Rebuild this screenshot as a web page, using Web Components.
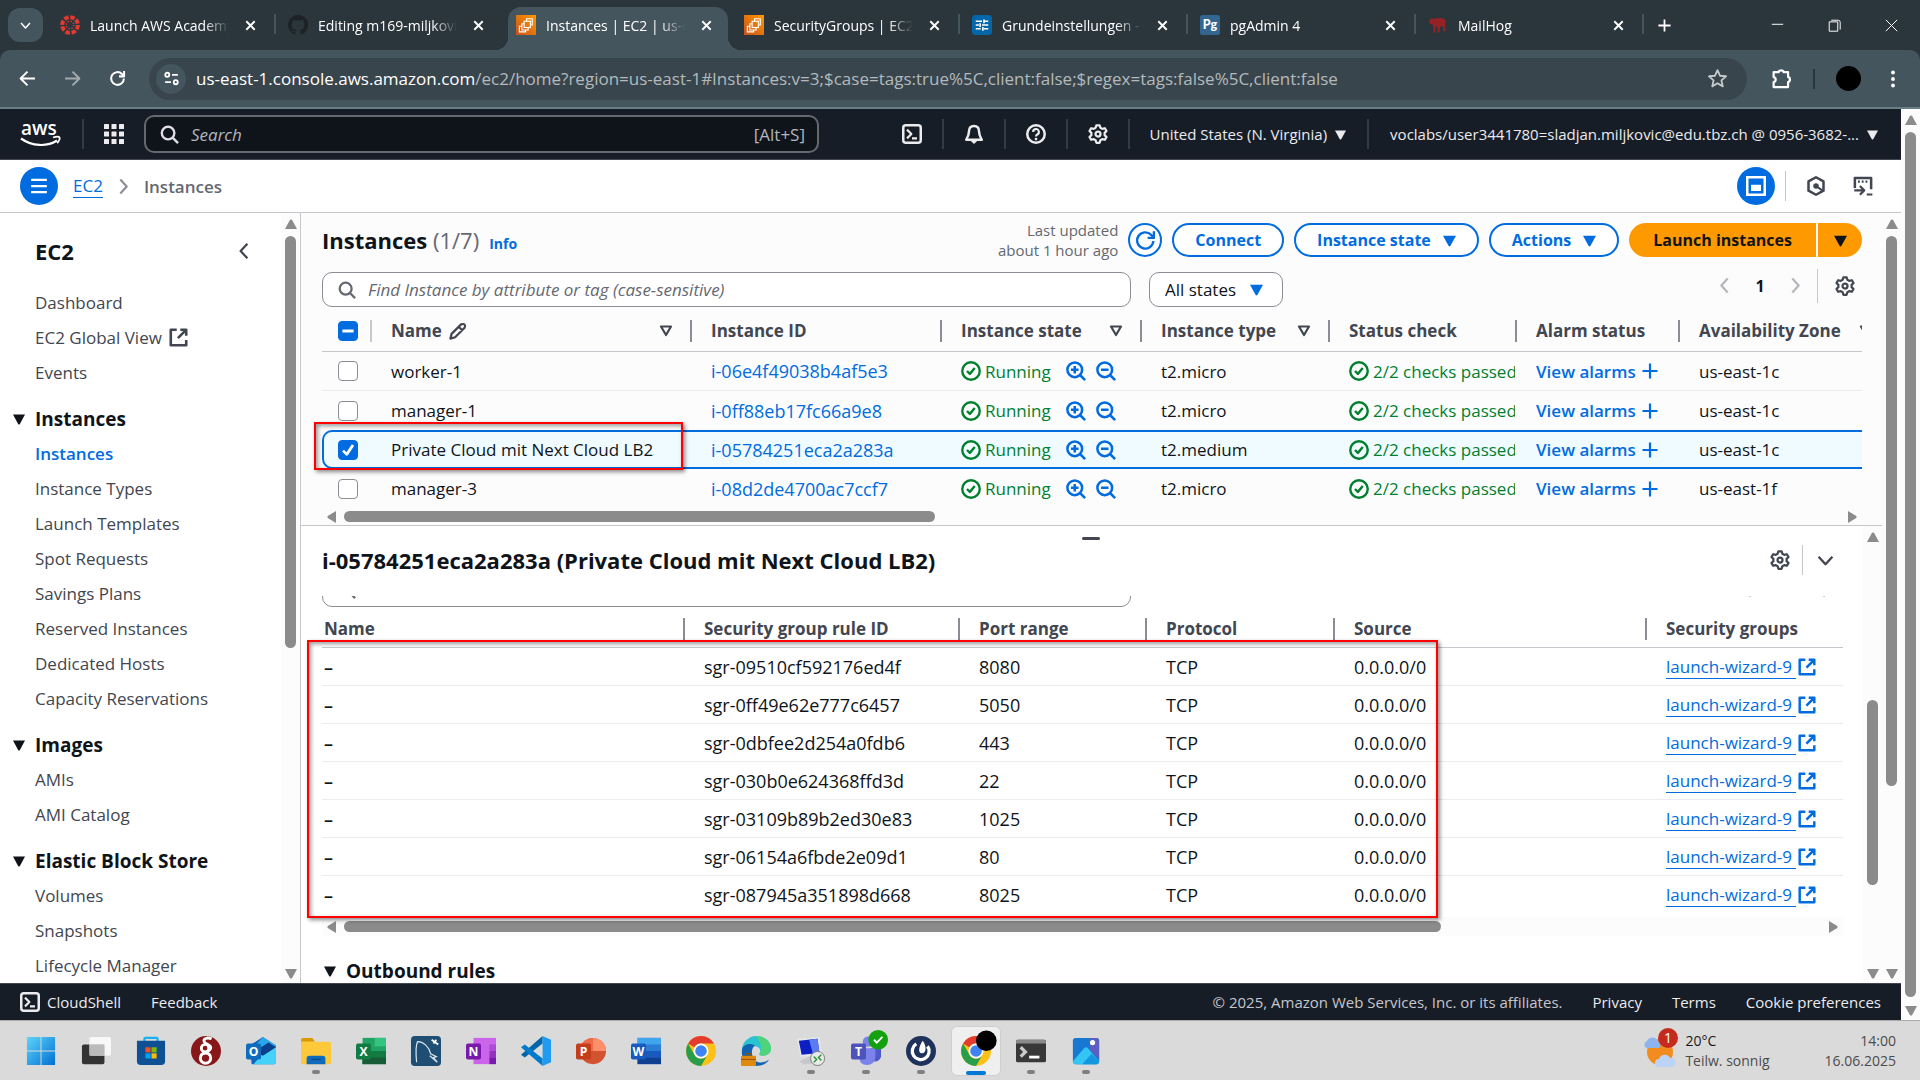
<!DOCTYPE html>
<html lang="en">
<head>
<meta charset="utf-8">
<title>Instances | EC2 | us-east-1</title>
<style>
  html, body { margin: 0; height: 100%; }
  body {
    display: flex; flex-direction: column; height: 100vh; overflow: hidden;
    font-family: "Open Sans", "Noto Sans", sans-serif; font-size: 17px; color: #0f141a; background: #fff;
    --blue: #006ce0; --navy: #161d26; --line: #c6c6cd; --grey: #424650; --muted: #656871; --green: #00802f;
  }
  .view { flex: 1; min-height: 0; display: flex; }
  .page { flex: 1; min-width: 0; display: flex; flex-direction: column; }
  .work { flex: 1; min-height: 0; display: flex; }
  .main { flex: 1; min-width: 0; display: flex; flex-direction: column; background: #fcfcfd; }
</style>
</head>
<body>
<chrome-tabs>
  <chrome-tab icon="canvas" sep>Launch AWS Academy Learner Lab</chrome-tab>
  <chrome-tab icon="github">Editing m169-miljkovic/README</chrome-tab>
  <chrome-tab icon="ec2" active>Instances | EC2 | us-east-1</chrome-tab>
  <chrome-tab icon="ec2" sep>SecurityGroups | EC2 | us-east</chrome-tab>
  <chrome-tab icon="tune" sep>Grundeinstellungen - Nextcloud</chrome-tab>
  <chrome-tab icon="pg" sep>pgAdmin 4</chrome-tab>
  <chrome-tab icon="hog" sep>MailHog</chrome-tab>
</chrome-tabs>
<chrome-toolbar></chrome-toolbar>
<div class="view">
  <div class="page">
    <aws-header></aws-header>
    <crumb-bar></crumb-bar>
    <div class="work">
      <side-nav></side-nav>
      <div class="main">
        <instance-list></instance-list>
        <split-panel></split-panel>
      </div>
      <scroll-bar before="0" thumb="550" after="176"></scroll-bar>
    </div>
    <aws-footer></aws-footer>
  </div>
  <scroll-bar before="0" thumb="865" after="2"></scroll-bar>
</div>
<win-taskbar></win-taskbar>

<script>
const BASE = ':host,*{box-sizing:border-box}a{color:inherit;text-decoration:none}button,input,select{font:inherit;color:inherit;margin:0}input[type=text]{padding:0}button{background:none;border:0;padding:0;display:flex;align-items:center;justify-content:center}';

function define(name, css, html, setup) {
  const tpl = document.createElement('template');
  if (typeof html === 'string') tpl.innerHTML = '<style>' + BASE + css + '</style>' + html;
  customElements.define(name, class extends HTMLElement {
    connectedCallback() {
      if (this.shadowRoot) return;
      const root = this.attachShadow({ mode: 'open' });
      if (typeof html === 'function') root.innerHTML = '<style>' + BASE + css + '</style>' + html(this);
      else root.append(tpl.content.cloneNode(true));
      if (setup) setup(root, this);
    }
  });
}

/* ---------- icons, 16-unit grid, stroked in the current colour ---------- */
const S = (d, w = 2) => `<path d="${d}" fill="none" stroke="currentColor" stroke-width="${w}" stroke-linejoin="round"/>`;
const ICONS = {
  menu: S('M1 2.5h14M1 8h14M1 13.5h14'),
  close: S('M3.5 3.5l9 9M12.5 3.5l-9 9', 2),
  closeThin: S('M1 1l14 14M15 1L1 15', 1.2),
  min: S('M1 6.5h14', 1.2),
  restore: S('M1.5 3.5h10.500v11.500h-10.500z', 1.2) + S('M4 1.500h8.500q2.500 0 2.500 2.500v9', 1.2),
  plus: S('M8 .5v15M.5 8h15', 2.200),
  chevDown: S('M1.500 4.500l6.500 7 6.500-7', 2.200),
  chevLeft: S('M11 1.5L5 8l6 6.5', 2),
  chevRight: S('M5 1.5L11 8l-6 6.5', 2),
  back: S('M15 8H2M8 1.5L1.5 8 8 14.5', 1.8),
  forward: S('M1 8h13M8 1.5L14.5 8 8 14.5', 1.8),
  reload: S('M14 8a6 6 0 1 1-1.8-4.3L14 5.4', 1.9) + S('M14.2 1v5H9.4', 1.9),
  refresh: S('M14 8.4A6.2 6.2 0 1 1 12.4 3.8L14 5.4', 1.8) + S('M14.4 1v5H9.6', 1.8),
  site: '<g fill="none" stroke="currentColor" stroke-width="1.7"><circle cx="4" cy="4.5" r="1.9"/><path d="M8.5 4.5H14M2 11.5h5.5"/><circle cx="12" cy="11.5" r="1.9"/></g>',
  star: S('M8 1.6l1.9 4.3 4.6.4-3.5 3.1 1 4.6L8 11.6 4 14l1-4.6L1.500 6.300l4.6-.4z', 1.4),
  puzzle: S('M2 3.200h3.800a2 1.800 0 0 1 3.900 0H13v3.600a1.800 2 0 0 1 0 3.900V14.500H2v-3.700a2 2 0 0 0 0-3.900z', 1.7),
  dots: '<g fill="currentColor"><circle cx="8" cy="2.200" r="1.700"/><circle cx="8" cy="8" r="1.700"/><circle cx="8" cy="13.800" r="1.700"/></g>',
  search: '<g fill="none" stroke="currentColor" stroke-width="2"><circle cx="6.800" cy="6.800" r="5.300"/><path d="M10.600 10.600l4.600 4.600"/></g>',
  grid: '<g fill="currentColor">' + [0, 6, 12].map(y => [0, 6, 12].map(x => `<rect x="${x}" y="${y}" width="4" height="4" rx=".4"/>`).join('')).join('') + '</g>',
  shell: '<rect x="1" y="1" width="14" height="14" rx="2" fill="none" stroke="currentColor" stroke-width="2"/>' + S('M4 4.500L7.500 8 4 11.500M8 11.500h4', 1.700),
  bell: S('M8 1.500c-2.800 0-4 2-4 4.300C4 9 3 10.500 1.800 12.500h12.400C13 10.500 12 9 12 5.800 12 3.500 10.800 1.500 8 1.500z', 2) + '<path d="M5.500 13.500h5L8 16z" fill="currentColor"/>',
  help: '<circle cx="8" cy="8" r="7" fill="none" stroke="currentColor" stroke-width="2"/>' + S('M5.700 6.400a2.300 2.300 0 1 1 3.300 2c-.7.400-1 .8-1 1.600', 1.700) + '<circle cx="8" cy="12" r="1.100" fill="currentColor"/>',
  gear: S('M6.700 1h2.600l.6 2 1.500.9 2.100-.5 1.300 2.200-1.500 1.500v1.800l1.500 1.500-1.300 2.200-2.100-.5-1.500.9-.6 2H6.700l-.6-2-1.500-.9-2.100.5-1.300-2.200 1.500-1.500V7.100L1.200 5.600l1.300-2.200 2.100.5 1.500-.9z', 1.800) + '<circle cx="8" cy="8" r="2" fill="none" stroke="currentColor" stroke-width="1.800"/>',
  caret: '<path d="M0 2h16L9.200 14.500q-1.200 1.500-2.400 0z" fill="currentColor"/>',
  filter: S('M3 3.500h10l-5 8.500z', 2.200),
  panel: '<rect x="1" y="1" width="14" height="14" fill="none" stroke="currentColor" stroke-width="2"/><path d="M4 7h8v5H4z" fill="currentColor"/>',
  hex: S('M8 1l6 3.300v7.400L8 15l-6-3.300V4.300z', 2) + '<circle cx="8" cy="8" r="2.200" fill="currentColor"/>' + S('M8 8l5 3.500', 1.700),
  term: S('M1.500 9.500v-8h13v9', 2) + S('M4 4.500h1.500M7 4.500h1.500M10 4.500h1.500M1 11.500h7.500M5.500 8l3.500 3.500L5.500 15M11 14.800h4.500', 1.700),
  external: S('M6.500 1.500h-5v13h13v-4.500M9.500 1.500h5v5M14 2L7.500 8.500', 2.200),
  edit: S('M2 14l1-4 8-8q2.200-.8 3 .2t0 2.600l-8 8zM9 4l3 3', 1.800),
  ok: '<circle cx="8" cy="8" r="7" fill="none" stroke="currentColor" stroke-width="1.900"/>' + S('M4.800 8l2.300 2.300L11 5.600', 1.900),
  zoomIn: '<g fill="none" stroke="currentColor" stroke-width="2"><circle cx="7" cy="7" r="5.900"/><path d="M11 11l4.300 4.300M7 4v6M4 7h6"/></g>',
  zoomOut: '<g fill="none" stroke="currentColor" stroke-width="2"><circle cx="7" cy="7" r="5.900"/><path d="M11 11l4.300 4.300M4 7h6"/></g>',
  check: S('M4 8.500l3 3 5-7.500', 2.200),
  dash: S('M3.500 8h9', 2.400),
  canvas: '<circle cx="8" cy="8" r="6.300" fill="none" stroke="#e4392f" stroke-width="3.200" stroke-dasharray="3.600 1.350"/><circle cx="8" cy="8" r="3" fill="none" stroke="#e4392f" stroke-width="1.100" stroke-dasharray="1.100 1.260"/>',
  github: '<path fill="#1c2226" d="M8 0a8 8 0 0 0-2.500 15.600c.4.100.5-.2.500-.4v-1.500c-2 .5-2.600-.6-2.800-1.100-.3-.6-.7-.9-1-1.100.7-.2 1.300.3 1.700.9.600 1 1.400.9 2.100.6.100-.5.300-.8.500-1-1.800-.2-3.600-.9-3.600-4 0-.9.300-1.600.8-2.100-.1-.4-.3-1.200.1-2.200 0 0 .7-.2 2.200.8a7.500 7.500 0 0 1 4 0c1.500-1 2.200-.8 2.200-.8.400 1 .2 1.800.1 2.200.5.500.8 1.200.8 2.100 0 3.100-1.900 3.800-3.600 4 .3.300.5.700.5 1.500v1.700c0 .2.100.500.6.4A8 8 0 0 0 8 0z"/>',
  ec2: '<defs><linearGradient id="g" x1="0" y1="1" x2="1" y2="0"><stop offset="0" stop-color="#c8511b"/><stop offset="1" stop-color="#f90"/></linearGradient></defs><path fill="url(#g)" d="M0 0h16v16H0z"/><g fill="none" stroke="#fff" stroke-width=".9"><rect x="6.500" y="5" width="5" height="5"/><path d="M8.500 5V3H13v5h-1.500M6.500 7H4.700v5h5v-2M4.700 9H2.700v4.500h5V12"/></g>',
  tune: '<rect width="16" height="16" rx="3" fill="#0267a8"/><g stroke="#fff" stroke-width="1.300"><path d="M3 5h5M10 5h3M3 8h2.500M8 8h5M3 11h4M9.500 11H13M9.600 3.500v3M6.500 6.500v3M8.700 9.500v3"/></g>',
  pg: '<rect width="16" height="16" rx="2" fill="#326690"/><text x="8" y="11" text-anchor="middle" font-family="Lato,sans-serif" font-weight="900" font-size="10" fill="#fff">Pg</text>',
  hog: '<path fill="#952225" d="M1 4l2-1.500 2 .5c3-1 7-1 8.500.5 1 1.500.6 3 .3 4l.2 5.500h-1.500l-.5-4-2.500.5-.2 4.500H7.800L7.500 9.500 6 9.300V14H4.500L4 8 1.500 7z"/>',
};
define('ui-icon', ':host{display:block;flex:none;width:20px;height:20px}svg{display:block;width:100%;height:100%;overflow:visible}',
  el => `<svg viewBox="0 0 16 16" aria-hidden="true">${ICONS[el.getAttribute('name')]}</svg>`);

/* ---------- scroll bar: arrows at both ends, thumb placed by flex shares ---------- */
define('scroll-bar', `
  :host{display:flex;flex:none;flex-direction:column;align-items:center;width:19px;padding:6px 0 4px;background:#fcfcfc;color:#8b8b8b}
  :host([wide]){flex-direction:row;width:auto;height:17px;padding:0 5px}
  svg{display:block;flex:none;width:12px;height:10px}
  :host([wide]) svg{width:9px;height:12px}
  .rail{flex:1;display:flex;flex-direction:column;align-self:center;width:11px;padding:7px 0;margin:0}
  :host([wide]) .rail{flex-direction:row;width:auto;height:11px;padding:0 8px}
  .thumb{border-radius:6px;background:#8b8b8b}`,
  el => {
    const a = n => +el.getAttribute(n), wide = el.hasAttribute('wide');
    const tri = up => `<svg viewBox="0 0 12 12" preserveAspectRatio="none"><path fill="currentColor" d="${wide ? (up ? 'M12 0v12L1 7Q0 6 1 5z' : 'M0 0v12l11-5q1-1 0-2z') : (up ? 'M0 12h12L7 1Q6 0 5 1z' : 'M0 0h12L7 11q-1 1-2 0z')}"/></svg>`;
    return `${tri(true)}<div class="rail"><span style="flex:${a('before')} 0 0"></span><span class="thumb" style="flex:${a('thumb')} 0 0"></span><span style="flex:${a('after')} 0 0"></span></div>${tri(false)}`;
  });

/* ---------- browser frame ---------- */
define('chrome-tabs', `
  :host{display:flex;align-items:flex-end;height:50px;flex:none;padding-left:8px;background:#2b363c;color:#fff}
  .pick{width:35px;height:34px;margin:0 5px 8px 0;border-radius:12px;background:#44555e}
  .pick ui-icon{width:11px;height:11px}
  .add{width:40px;height:34px;margin-bottom:8px}.add ui-icon{width:13px;height:13px}
  .win{display:flex;margin-left:auto;height:50px}.win button{width:57px}.win ui-icon{width:13px;height:13px}`,
  `<button class="pick" aria-label="Search tabs"><ui-icon name="chevDown"></ui-icon></button>
   <slot></slot>
   <button class="add" aria-label="New tab"><ui-icon name="plus"></ui-icon></button>
   <div class="win"><button aria-label="Minimize"><ui-icon name="min"></ui-icon></button><button aria-label="Restore"><ui-icon name="restore"></ui-icon></button><button aria-label="Close"><ui-icon name="closeThin"></ui-icon></button></div>`);

define('chrome-tab', `
  :host{display:flex;flex:0 1 228px;min-width:0;height:43px;padding:0 4px;position:relative;font-size:14px}
  .tab{flex:1;min-width:0;display:flex;align-items:center;gap:10px;padding:0 14px 7px 8px;border-radius:13px 13px 0 0}
  :host([active]) .tab{background:#44555e}
  :host([active])::before,:host([active])::after{content:"";position:absolute;bottom:0;width:13px;height:13px}
  :host([active])::before{left:-9px;background:radial-gradient(circle at 0 0,transparent 13px,#44555e 13px)}
  :host([active])::after{right:-9px;background:radial-gradient(circle at 100% 0,transparent 13px,#44555e 13px)}
  :host([sep])::before{content:"";position:absolute;right:0;top:7px;width:2px;height:20px;background:#44555e}
  .t{flex:1;min-width:0;overflow:hidden;white-space:nowrap;-webkit-mask-image:linear-gradient(90deg,#000 82%,transparent);mask-image:linear-gradient(90deg,#000 82%,transparent)}
  button{width:15px;height:15px;margin-left:4px}button ui-icon{width:15px;height:15px}`,
  el => `<div class="tab"><ui-icon name="${el.getAttribute('icon')}"></ui-icon><span class="t"><slot></slot></span><button aria-label="Close tab"><ui-icon name="close"></ui-icon></button></div>`);

define('chrome-toolbar', `
  :host{display:block;flex:none;background:#2b363c;color:#fff}
  .bar{display:flex;align-items:center;height:59px;border-bottom:2px solid #6b7f86;background:#44555e;border-radius:10px 10px 0 0;padding:0 18px 0 19px}
  ui-icon{width:17px;height:17px}
  .nav{display:flex;gap:28px;margin-right:23px}.nav .off{opacity:.5}
  .url{flex:1;min-width:0;display:flex;align-items:center;height:42px;padding:0 19px 0 7px;border-radius:21px;background:#39454c}
  .site{width:30px;height:30px;border-radius:50%;background:#44555e;margin-right:10px;flex:none}
  .addr{flex:1;white-space:nowrap;overflow:hidden;color:#b3babd}.addr b{font-weight:400;color:#fff}
  .url .star{color:#c3c9cc}.url .star ui-icon{width:21px;height:21px}
  .ext{margin-left:24px}.ext ui-icon{width:21px;height:21px}
  .sep{width:2px;height:20px;margin:0 21px;background:#2b363c}
  .me{width:25px;height:25px;border-radius:50%;background:#000;margin-right:23px}
  .dots ui-icon{width:18px;height:18px}`,
  `<div class="bar"><div class="nav"><button aria-label="Back"><ui-icon name="back"></ui-icon></button><button class="off" aria-label="Forward"><ui-icon name="forward"></ui-icon></button><button aria-label="Reload"><ui-icon name="reload"></ui-icon></button></div>
   <div class="url"><button class="site" aria-label="Site information"><ui-icon name="site"></ui-icon></button><span class="addr"><b>us-east-1.console.aws.amazon.com</b>/ec2/home?region=us-east-1#Instances:v=3;$case=tags:true%5C,client:false;$regex=tags:false%5C,client:false</span><button class="star" aria-label="Bookmark"><ui-icon name="star"></ui-icon></button></div>
   <button class="ext" aria-label="Extensions"><ui-icon name="puzzle"></ui-icon></button><span class="sep"></span><button class="me" aria-label="Profile"></button><button class="dots" aria-label="Menu"><ui-icon name="dots"></ui-icon></button></div>`);

/* ---------- console header ---------- */
define('aws-header', `
  :host{display:flex;align-items:center;flex:none;height:51px;padding:0 23px 0 20px;background:var(--navy);border-bottom:1px solid var(--grey);color:#ebebf0;font-size:15px}
  .logo{display:block;width:42px;height:30px;overflow:visible}
  .sep{flex:none;width:2px;height:30px;margin:0 20px;background:#343b46}.sep.w{margin:0 21px}
  .search{flex:0 1 675px;display:flex;align-items:center;gap:12px;height:38px;margin-left:20px;padding:0 12px 0 14px;border:2px solid #656871;border-radius:10px;background:#0f141a;font-size:17px;color:#b4b4bb}
  .search ui-icon{width:19px;height:19px;color:#dedee3}
  .search input{flex:1;min-width:0;background:none;border:0;outline:0}
  .search input::placeholder{color:#b4b4bb;font-style:italic;opacity:1}
  .right{margin-left:auto;display:flex;align-items:center;white-space:nowrap}
  .right button{gap:8px;font-weight:500}.caret{width:11px;height:11px}`,
  `<a href="#" aria-label="AWS home"><svg class="logo" viewBox="0 0 42 30"><text x="1" y="16" font-family="Open Sans,sans-serif" font-weight="600" font-size="19" fill="#fff">aws</text><path d="M1 19.500c11 8 26 8.500 36 2" fill="none" stroke="#fff" stroke-width="2.200"/><path d="M33 18.500c3-1 6-1 6.500 0s-.6 3.600-2.300 5.600" fill="none" stroke="#fff" stroke-width="1.800"/></svg></a>
   <span class="sep"></span><button aria-label="Services"><ui-icon name="grid"></ui-icon></button>
   <label class="search"><ui-icon name="search"></ui-icon><input type="text" placeholder="Search" aria-label="Search"><span>[Alt+S]</span></label>
   <div class="right"><button aria-label="CloudShell"><ui-icon name="shell"></ui-icon></button><span class="sep"></span><button aria-label="Notifications"><ui-icon name="bell"></ui-icon></button><span class="sep"></span><button aria-label="Help"><ui-icon name="help"></ui-icon></button><span class="sep"></span><button aria-label="Settings"><ui-icon name="gear"></ui-icon></button><span class="sep"></span>
   <button>United States (N. Virginia)<ui-icon class="caret" name="caret"></ui-icon></button><span class="sep w"></span>
   <button>voclabs/user3441780=sladjan.miljkovic@edu.tbz.ch @ 0956-3682-...<ui-icon class="caret" name="caret"></ui-icon></button></div>`);

define('crumb-bar', `
  :host{display:flex;align-items:center;flex:none;height:53px;padding:0 28px 0 20px;background:#fff;border-bottom:1px solid var(--line);color:var(--grey)}
  .round{width:38px;height:38px;border-radius:50%;background:var(--blue);color:#fff}
  .round ui-icon{width:18px;height:18px}.round .big{width:20px;height:20px}
  a{margin-left:15px;color:var(--blue);line-height:22px;border-bottom:1px solid}
  .chev{width:17px;height:17px;margin:0 12px;color:#8c8c94}
  b{font-weight:600;color:var(--muted)}
  .tools{margin-left:auto;display:flex;align-items:center}
  .sep{width:1px;height:30px;margin:0 20px 0 10px;background:var(--line)}.last{margin-left:27px}`,
  `<button class="round" aria-label="Toggle navigation"><ui-icon name="menu"></ui-icon></button><a href="#">EC2</a><ui-icon class="chev" name="chevRight"></ui-icon><b>Instances</b>
   <div class="tools"><button class="round" aria-label="Split panel"><ui-icon class="big" name="panel"></ui-icon></button><span class="sep"></span><button aria-label="Amazon Q"><ui-icon name="hex"></ui-icon></button><button class="last" aria-label="Terminal"><ui-icon name="term"></ui-icon></button></div>`);

/* ---------- side navigation ---------- */
const NAV = [['', ['Dashboard', 'EC2 Global View', 'Events']],
  ['Instances', ['Instances', 'Instance Types', 'Launch Templates', 'Spot Requests', 'Savings Plans', 'Reserved Instances', 'Dedicated Hosts', 'Capacity Reservations']],
  ['Images', ['AMIs', 'AMI Catalog']],
  ['Elastic Block Store', ['Volumes', 'Snapshots', 'Lifecycle Manager']]];
define('side-nav', `
  :host{display:flex;flex:none;width:301px;border-right:1px solid var(--line);background:#fff;overflow:hidden}
  nav{flex:1;min-width:0;overflow:hidden;padding-top:20px}
  header{display:flex;align-items:center;justify-content:space-between;height:36px;margin-bottom:16px;padding:0 28px 0 35px;font-size:22px;font-weight:700}
  header ui-icon{width:18px;height:18px;color:var(--grey)}
  a,h3{display:flex;align-items:center;height:35px;margin:0;white-space:nowrap}
  a{gap:7px;padding-left:35px;color:var(--grey)}a ui-icon{width:19px;height:19px}
  .on{color:var(--blue);font-weight:600}
  h3{gap:10px;margin-top:11px;padding-left:13px;font-size:19px;font-weight:700}h3 ui-icon{width:12px;height:12px}`,
  () => `<nav><header>EC2<button aria-label="Close navigation"><ui-icon name="chevLeft"></ui-icon></button></header>` +
    NAV.map(([h, items]) => (h ? `<h3><ui-icon name="caret"></ui-icon>${h}</h3>` : '') +
      items.map(t => `<a href="#" class="${t === 'Instances' ? 'on' : ''}">${t}${t === 'EC2 Global View' ? '<ui-icon name="external"></ui-icon>' : ''}</a>`).join('')).join('') +
    `</nav><scroll-bar before="0" thumb="412" after="314"></scroll-bar>`);

/* ---------- shared rules of the two tables ---------- */
const TABLE = `
  table{border-collapse:separate;border-spacing:0;table-layout:fixed}
  th,td{padding:0 0 0 21px;text-align:left;font-weight:400;white-space:nowrap;overflow:hidden}
  th{height:41px;padding:0;border-bottom:1px solid var(--line);font-weight:700;color:var(--grey)}
  th>div{display:flex;align-items:center;height:22px;padding-left:19px;border-left:2px solid #8c8c94;line-height:22px}
  td{border-bottom:1px solid #ebebf0}
  .line{display:flex;align-items:center}`;
const mark = '.mark{position:absolute;z-index:2;border:2px solid #f00;box-shadow:2px 2px 4px rgba(0,0,0,.45),inset 2px 2px 4px rgba(0,0,0,.4);pointer-events:none}';

const ROWS = [['worker-1', 'i-06e4f49038b4af5e3', 't2.micro', 'us-east-1c'], ['manager-1', 'i-0ff88eb17fc66a9e8', 't2.micro', 'us-east-1c'],
  ['Private Cloud mit Next Cloud LB2', 'i-05784251eca2a283a', 't2.medium', 'us-east-1c'], ['manager-3', 'i-08d2de4700ac7ccf7', 't2.micro', 'us-east-1f']];
define('instance-list', TABLE + mark + `
  :host{display:block;flex:none;position:relative;padding:10px 20px 0 21px}
  .top,.find{display:flex;align-items:center}
  .top{gap:10px;height:34px;margin-bottom:15px}
  h1{margin:0 auto 0 0;font-size:22px;font-weight:700}h1 span{font-weight:400;color:var(--muted)}h1 a{font-size:14px;color:var(--blue);margin-left:10px}
  .upd{font-size:15px;line-height:20px;text-align:right;color:var(--muted)}
  .btn{height:34px;padding:0 21px;gap:12px;border:2px solid var(--blue);border-radius:17px;background:#fff;color:var(--blue);font-size:16px;font-weight:700}
  .btn ui-icon{width:13px;height:13px}.btn.ic{width:34px;padding:0}.btn.ic ui-icon{width:21px;height:21px}
  .go{display:flex;gap:2px}.go button{height:34px;background:#f90;font-size:16px;font-weight:700;padding:0 24px;border-radius:17px 0 0 17px}.go button+button{width:44px;padding:0;border-radius:0 17px 17px 0}.go ui-icon{width:13px;height:13px}
  .find{height:35px;margin-bottom:4px}
  .box{display:flex;align-items:center;height:35px;border:1px solid #8c8c94;border-radius:10px;background:#fff}
  .q{flex:0 1 809px;gap:12px;padding-left:15px;color:var(--muted)}.q ui-icon{width:18px;height:18px}
  input[type=text]{flex:1;min-width:0;border:0;background:none;outline:0}input::placeholder{color:var(--muted);font-style:italic;opacity:1}
  .sel{display:grid;margin-left:18px}.sel>*{grid-area:1/1}
  select{appearance:none;height:33px;width:132px;padding:0 0 0 15px;border:0;background:none;outline:0;font-size:17px}
  .sel ui-icon{width:13px;height:13px;justify-self:end;align-self:center;margin-right:19px;color:var(--blue);pointer-events:none}
  .pg{display:flex;align-items:center;margin:-8px 7px 0 auto;font-weight:700;font-size:16px}.pg ui-icon{color:#b4b4bb;width:17px;height:17px}
  .pg span{width:54px;text-align:center}.pg i{width:1px;height:34px;margin:0 17px 0 13px;background:var(--line)}.pg .gear{width:20px;height:20px;color:var(--grey)}
  .clip{overflow:hidden}
  table{width:1616px}
  td{height:39px}tbody tr:nth-child(2) td,tbody tr:last-child td{border-bottom:0}
  th:first-child,td:first-child{padding-left:16px}
  .ck{display:grid;width:20px;height:20px}.ck>*{grid-area:1/1}.ck input{appearance:none;width:20px;height:20px;border:1px solid #8c8c94;border-radius:4px;background:#fff}
  .ck ui-icon{color:#fff;z-index:1;pointer-events:none}.ck .f{background:var(--blue);border-color:var(--blue)}
  .sel-row td{background:#f0fbff;border-top:2px solid var(--blue);border-bottom:2px solid var(--blue)!important}
  .sel-row td:first-child{border-left:2px solid var(--blue);border-radius:10px 0 0 10px;padding-left:14px}
  th .first{border-left-color:var(--line)}
  .edit{width:19px;height:19px;margin-left:6px}.flt{width:16px;height:16px;margin:0 16px 0 auto}.az{width:16px;height:16px;margin-left:17px}
  .id{color:var(--blue);font-size:18px}
  .g{gap:4px;color:var(--green)}.g button{color:var(--blue);margin-left:6px}.g button:first-of-type{margin-left:11px}
  .al{gap:6px;color:var(--blue);font-weight:600}.al ui-icon{width:16px;height:16px}`,
  () => `<div class="top"><h1>Instances <span>(1/7)</span><a href="#">Info</a></h1><div class="upd">Last updated<br>about 1 hour ago</div>
    <button class="btn ic" aria-label="Refresh"><ui-icon name="refresh"></ui-icon></button><button class="btn">Connect</button><button class="btn">Instance state<ui-icon name="caret"></ui-icon></button><button class="btn">Actions<ui-icon name="caret"></ui-icon></button>
    <div class="go"><button>Launch instances</button><button aria-label="More launch options"><ui-icon name="caret"></ui-icon></button></div></div>
  <div class="find"><label class="box q"><ui-icon name="search"></ui-icon><input type="text" aria-label="Find Instance" placeholder="Find Instance by attribute or tag (case-sensitive)"></label>
    <label class="box sel"><select aria-label="State filter"><option>All states</option></select><ui-icon name="caret"></ui-icon></label>
    <div class="pg"><button aria-label="Previous page"><ui-icon name="chevLeft"></ui-icon></button><span>1</span><button aria-label="Next page"><ui-icon name="chevRight"></ui-icon></button><i></i><button aria-label="Preferences"><ui-icon class="gear" name="gear"></ui-icon></button></div></div>
  <div class="clip"><table><colgroup>${[48, 320, 250, 200, 188, 187, 163, 260].map(w => `<col style="width:${w}px">`).join('')}</colgroup>
    <thead><tr><th><label class="ck"><input class="f" type="checkbox" aria-label="Select all"><ui-icon name="dash"></ui-icon></label></th>
    <th><div class="first">Name<ui-icon class="edit" name="edit"></ui-icon><ui-icon class="flt" name="filter"></ui-icon></div></th><th><div>Instance ID</div></th>
    <th><div>Instance state<ui-icon class="flt" name="filter"></ui-icon></div></th><th><div>Instance type<ui-icon class="flt" name="filter"></ui-icon></div></th><th><div>Status check</div></th><th><div>Alarm status</div></th>
    <th><div>Availability Zone<ui-icon class="az" name="filter"></ui-icon></div></th></tr></thead>
    <tbody>${ROWS.map((r, i) => `<tr class="${i === 2 ? 'sel-row' : ''}"><td><label class="ck"><input type="checkbox" aria-label="Select ${r[0]}" ${i === 2 ? 'class="f" checked' : ''}>${i === 2 ? '<ui-icon name="check"></ui-icon>' : ''}</label></td>
      <td>${r[0]}</td><td><a class="id" href="#">${r[1]}</a></td><td><div class="line g"><ui-icon name="ok"></ui-icon>Running<button aria-label="Filter in"><ui-icon name="zoomIn"></ui-icon></button><button aria-label="Filter out"><ui-icon name="zoomOut"></ui-icon></button></div></td>
      <td>${r[2]}</td><td><div class="line g"><ui-icon name="ok"></ui-icon>2/2 checks passed</div></td><td><a class="line al" href="#">View alarms<ui-icon name="plus"></ui-icon></a></td><td>${r[3]}</td></tr>`).join('')}</tbody></table></div>
  <scroll-bar wide before="0" thumb="591" after="904"></scroll-bar>
  <div class="mark" style="left:13px;top:209px;width:369px;height:48px"></div>`,
  root => { root.querySelector('thead input').indeterminate = true; });

/* ---------- lower panel with the security rules ---------- */
const RULES = [['09510cf592176ed4f', 8080], ['0ff49e62e777c6457', 5050], ['0dbfee2d254a0fdb6', 443], ['030b0e624368ffd3d', 22], ['03109b89b2ed30e83', 1025], ['06154a6fbde2e09d1', 80], ['087945a351898d668', 8025]];
define('split-panel', TABLE + mark + `
  :host{display:flex;flex:1;min-height:0;position:relative;border-top:1px solid var(--line);background:#fff}
  .body{flex:1;min-width:0;display:flex;flex-direction:column}
  .grip{align-self:center;width:18px;height:3px;margin:11px 0 4px 18px;border-radius:2px;background:var(--grey)}
  header{display:flex;align-items:center;height:32px;margin-bottom:20px;padding:0 29px 0 21px;color:var(--grey)}
  h2{margin:0 auto 0 0;font-size:22px;font-weight:700;color:#0f141a}
  header i{width:1px;height:30px;margin:0 14px 0 12px;background:var(--line)}.down{width:17px;height:17px}
  .scroll{flex:1;min-height:0;overflow:hidden;padding:0 20px 0 21px}
  .find{display:flex;margin-top:-24px}
  .q{flex:0 1 809px;display:flex;align-items:center;gap:12px;height:35px;padding-left:15px;border:1px solid #8c8c94;border-radius:10px;color:var(--muted)}.q ui-icon{width:18px;height:18px}
  input{flex:1;border:0;background:none;outline:0}input::placeholder{color:var(--muted);font-style:italic;opacity:1}
  .pg{display:flex;align-items:center;gap:62px;margin:0 8px 0 auto;color:#b4b4bb}.pg ui-icon{width:17px;height:17px}
  table{width:100%}td{height:38px;font-size:18px}th{padding-top:3px}
  tr:last-child td{border-bottom:0}
  td:first-child{padding-left:2px;font-weight:600}th:first-child>div{border:0;padding-left:2px}
  a{color:var(--blue);gap:2px}a span{border-bottom:1px solid;font-size:17px;padding-right:4px;line-height:23px}
  a ui-icon{width:18px;height:18px}
  h3{display:flex;align-items:center;gap:10px;margin:22px 0 0 2px;font-size:19px;line-height:26px}h3 ui-icon{width:12px;height:12px}
  scroll-bar[wide]{height:19px;margin-top:3px}`,
  () => `<div class="body"><div class="grip"></div><header><h2>i-05784251eca2a283a (Private Cloud mit Next Cloud LB2)</h2><button aria-label="Preferences"><ui-icon name="gear"></ui-icon></button><i></i><button aria-label="Collapse panel"><ui-icon class="down" name="chevDown"></ui-icon></button></header>
  <div class="scroll"><div class="find"><label class="q"><ui-icon name="search"></ui-icon><input type="text" aria-label="Filter rules" placeholder="Filter rules"></label><div class="pg"><ui-icon name="chevLeft"></ui-icon><ui-icon name="chevRight"></ui-icon></div></div>
  <table><colgroup><col style="width:361px"><col style="width:275px"><col style="width:187px"><col style="width:188px"><col style="width:312px"><col></colgroup>
  <thead><tr>${['Name', 'Security group rule ID', 'Port range', 'Protocol', 'Source', 'Security groups'].map(t => `<th><div>${t}</div></th>`).join('')}</tr></thead>
  <tbody>${RULES.map(r => `<tr><td>–</td><td>sgr-${r[0]}</td><td>${r[1]}</td><td>TCP</td><td>0.0.0.0/0</td><td><a class="line" href="#"><span>launch-wizard-9</span><ui-icon name="external"></ui-icon></a></td></tr>`).join('')}</tbody></table>
  <scroll-bar wide before="0" thumb="1096" after="380"></scroll-bar>
  <h3><ui-icon name="caret"></ui-icon>Outbound rules</h3></div></div>
  <scroll-bar before="151" thumb="185" after="77"></scroll-bar>
  <div class="mark" style="left:6px;top:114px;width:1131px;height:278px"></div>`);

define('aws-footer', `
  :host{display:flex;align-items:center;flex:none;height:37px;padding:0 20px;background:var(--navy);border-top:1px solid var(--grey);color:#ebebf0;font-size:15px;white-space:nowrap}
  button{gap:7px}.c{margin-left:auto;color:#c6c6cd}a{margin-left:30px}`,
  `<button><ui-icon name="shell"></ui-icon>CloudShell</button><a href="#">Feedback</a><span class="c">© 2025, Amazon Web Services, Inc. or its affiliates.</span><a href="#">Privacy</a><a href="#">Terms</a><a href="#">Cookie preferences</a>`);

/* ---------- task bar: icons on a 32-unit grid ---------- */
const letter = (c, bg) => `<rect x="0" y="8" width="16" height="17" rx="2" fill="${bg}"/><text x="8" y="21.500" text-anchor="middle" font-family="Open Sans,sans-serif" font-weight="700" font-size="13" fill="#fff">${c}</text>`;
const chrome = '<circle cx="16" cy="16" r="16" fill="#fbc116"/><path fill="#e33b2e" d="M16 0A16 16 0 0 1 29.900 8H16a8 8 0 0 0-7 4L2.200 8A16 16 0 0 1 16 0z"/><path fill="#2a9d4b" d="M2.200 8A16 16 0 0 0 16 32l7-12a8 8 0 0 1-14 0z"/><circle cx="16" cy="16" r="8" fill="#fff"/><circle cx="16" cy="16" r="6.200" fill="#3f82f1"/>';
const APPS = [
  ['Start', '<defs><linearGradient id="w" x2="1" y2="1"><stop stop-color="#5ed4fb"/><stop offset="1" stop-color="#0070d1"/></linearGradient></defs><path fill="url(#w)" d="M1 1h14.500v14.500H1zM16.500 1H31v14.500H16.500zM1 16.500h14.500V31H1zM16.500 16.500H31V31H16.500z"/>'],
  ['Task view', '<rect x="1" y="9" width="24" height="21" rx="2" fill="#333"/><rect x="9" y="1" width="23" height="20" rx="2" fill="#fff" opacity=".8"/><path d="M9 9h16v12H9z" fill="#bbb"/>'],
  ['Store', '<path d="M9 7V3q0-1 1-1h12q1 0 1 1v4" fill="none" stroke="#1ab1f0" stroke-width="2.400"/><path d="M1 5h30v22q0 4-4 4H5q-4 0-4-4z" fill="#0f4f93"/><path d="M10 12h5.500v5.500H10z" fill="#f25022"/><path d="M16.500 12H22v5.500h-5.500z" fill="#7fba00"/><path d="M10 18.500h5.500V24H10z" fill="#00a4ef"/><path d="M16.500 18.500H22V24h-5.500z" fill="#ffb900"/>'],
  ['WireGuard', '<circle cx="16" cy="16" r="16" fill="#88171a"/><path d="M22 3c-5-2-9 0-8 3s8 3 7 7c-1 3-5 4-8 6" fill="none" stroke="#fff" stroke-width="3"/><circle cx="15" cy="13" r="4" fill="none" stroke="#fff" stroke-width="3"/><circle cx="15.500" cy="23.500" r="5.500" fill="none" stroke="#fff" stroke-width="3.200"/>'],
  ['Outlook', '<path d="M4 10L18 1l14 9v18q0 2-2 2H6z" fill="#1066c0"/><path d="M18 1l14 9-14 9L8 12z" fill="#28a8ea"/><path d="M32 11v17q0 2-2 2H8l10-11z" fill="#44d2fb"/><path d="M24 7l8 5-14 9-8-5z" fill="#0a3f8c"/>' + letter('O', '#0f6cbd')],
  ['Explorer', '<path d="M0 4q0-2 2-2h10l3 4H0z" fill="#d99a00"/><path d="M0 6h30q2 0 2 2v20q0 2-2 2H0z" fill="#fdc93a"/><path d="M6 30v-6q0-3 3-3h14q3 0 3 3v6z" fill="#0f6cbd"/><path d="M11 25h10" stroke="#0a4a8a" stroke-width="1.500"/>', 1],
  ['Excel', '<path d="M7 2h25v28H7z" fill="#21a366"/><path d="M20 2h12v9H20z" fill="#33c481"/><path d="M7 16h25v14H7z" fill="#107c41"/><path d="M7 23h25v7H7z" fill="#185c37"/>' + letter('X', '#107c41')],
  ['Workbench', '<rect width="32" height="32" rx="4" fill="#1f4e75"/><path d="M6 28C5 18 5 10 7 6c6 0 12 5 14 13l6 3-3 1 4 5-8-7" fill="none" stroke="#d7e3ee" stroke-width="1.300"/><path d="M22 4l7 5M27 4l-3 4" stroke="#fff" stroke-width="2"/>'],
  ['OneNote', '<path d="M8 2h24v28H8z" fill="#ca64ea"/><path d="M25 9h7v7h-7z" fill="#ae4bd5"/><path d="M25 16h7v7h-7z" fill="#9332bf"/><path d="M25 23h7v7h-7z" fill="#7719aa"/>' + letter('N', '#7719aa')],
  ['VS Code', '<path d="M23 0v8L4 23l-4-3L23 0z" fill="#0065a9"/><path d="M0 12l4-3 19 15v8L0 12z" fill="#007acc"/><path d="M23 0l9 4v24l-9 4z" fill="#1f9cf0"/>'],
  ['PowerPoint', '<circle cx="18" cy="16" r="14" fill="#d35230"/><path d="M18 2a14 14 0 0 1 14 14H18z" fill="#ff8f6b"/><path d="M4 16A14 14 0 0 1 18 2v14z" fill="#ed6c47"/>' + letter('P', '#c43e1c')],
  ['Word', '<path d="M7 2h25v28H7z" fill="#2b7cd3"/><path d="M7 2h25v7H7z" fill="#41a5ee"/><path d="M7 16h25v7H7z" fill="#185abd"/><path d="M7 23h25v7H7z" fill="#103f91"/>' + letter('W', '#185abd')],
  ['Chrome', chrome],
  ['Edge', '<path d="M1 16A15.500 15.500 0 0 1 16 0c10 0 16 7 16 13 0 5-4 8-9 8-3 0-4-1-3-3 2-3-1-7-6-7-7 0-12 6-12 9z" fill="#2bc3d2"/><path d="M16 0c10 0 16 7 16 13 0 5-4 8-9 8-3 0-4-1-3-3 4-7-1-14-4-18z" fill="#4fd47a"/><path d="M1 16c0-8 9-9 14-6-4 2-5 11 0 16 5 4 11 2 15-1-3 5-8 7-14 7C7 32 0 25 1 16z" fill="#0f63b0"/><rect y="21" width="16" height="11" rx="1" fill="#e08a0b"/><path d="M0 25h16" stroke="#8f4f00"/><path d="M5 21v-2h6v2" fill="none" stroke="#8f4f00" stroke-width="1.500"/>'],
  ['Remote Desktop', '<path d="M1 3l24-2 3 19-23 2z" fill="#e4e6ea"/><path d="M3 5l20-2 2 15-19 2z" fill="#0b1fc4"/><path d="M14 4l9-1 2 15-7 1z" fill="#5b7bf0"/><path d="M4 27l10-5 8 7-14 1z" fill="#c6c8cc"/><circle cx="23" cy="24" r="7.500" fill="#e9e9e9" stroke="#777"/><path d="M19 22l3 3-3 3M27 20l-3 3 3 3" fill="none" stroke="#2c9a3a" stroke-width="1.600"/>', 1],
  ['Teams', '<circle cx="27" cy="9" r="4" fill="#5059c9"/><path d="M20 13h12v9q-2 6-8 5z" fill="#5059c9"/><circle cx="18" cy="6" r="5.500" fill="#7b83eb"/><path d="M9 13h17v10q-1 8-9 8t-8-8z" fill="#7b83eb"/>' + letter('T', '#4b53bc') + '<circle cx="29" cy="4" r="10.500" fill="#13a10e"/><path d="M24.500 4l3 3 6-6" fill="none" stroke="#fff" stroke-width="2"/>', 1],
  ['Mattermost', '<circle cx="16" cy="16" r="16" fill="#1e325c"/><path d="M11 8.500a9 9 0 1 0 12 2.500" fill="none" stroke="#fff" stroke-width="3.500"/><path d="M18 5c4 6 4 13-1 13.500C12 18 14 10 18 5z" fill="#fff"/>', 1],
  ['Chrome', chrome + '<circle cx="27" cy="5" r="11" fill="#000"/>', 2],
  ['Terminal', '<rect y="4" width="32" height="24" rx="2" fill="#383838"/><path d="M0 8V6q0-2 2-2h28q2 0 2 2v2z" fill="#8a8a8a"/><path d="M5 12l5 5-5 5" fill="none" stroke="#ccc" stroke-width="3.500"/><path d="M14 22.500h11" stroke="#fff" stroke-width="3"/>', 1],
  ['Photos', '<rect x="2" y="2" width="28" height="28" rx="3" fill="#1778d4"/><path d="M20 2h7q3 0 3 3v20l-10-10z" fill="#5a5fc0"/><path d="M2 27l12-14q2-2 4 0l12 14q0 3-3 3H5q-3 0-3-3z" fill="#35c5f5"/><path d="M12 30l10-11 8 8q0 3-3 3z" fill="#1497df"/><circle cx="23" cy="7" r="2.800" fill="#fff"/>', 1],
];
define('win-taskbar', `
  :host{display:flex;align-items:center;flex:none;height:60px;padding:0 24px 0 17px;border-top:1px solid #aaa;background:#dadada;color:#4c4c4c;font-size:14px;line-height:20px}
  .apps{display:flex;gap:7px}
  .apps button{position:relative;width:48px;height:48px;border-radius:5px}
  svg{display:block;width:30px;height:30px;overflow:visible}
  .apps .run::after{content:"";position:absolute;bottom:1px;width:8px;height:4px;border-radius:2px;background:#808080}
  .apps .on{background:#efefef;box-shadow:0 0 0 1px #cfcfcf}.apps .on::after{bottom:0;width:20px;background:#0078d4}
  .sky{margin-left:auto;gap:9px;text-align:left;margin-right:55px}.sky svg{width:32px;height:34px}.sky b{display:block;font-weight:400;color:#1a1a1a}
  time{text-align:right}`,
  () => `<div class="apps">${APPS.map(([n, s, r]) => `<button aria-label="${n}" class="${r ? 'run' : ''}${r === 2 ? ' on' : ''}"><svg viewBox="0 0 32 32">${s}</svg></button>`).join('')}</div>
   <button class="sky"><svg viewBox="0 0 32 34"><circle cx="16" cy="18" r="13" fill="#f28c1e"/><path d="M2 14a4 4 0 0 1 1-7 6 6 0 0 1 11 0 4 4 0 0 1 1 7z" fill="#8db4ee"/><path d="M15 33a4 4 0 0 1 0-8 6 6 0 0 1 11-1 4.500 4.500 0 0 1 2 9z" fill="#bcd3f7"/><circle cx="24" cy="4" r="10" fill="#c42b1c"/><text x="24" y="9" text-anchor="middle" font-family="Open Sans,sans-serif" font-size="14" fill="#fff">1</text></svg><span><b>20°C</b>Teilw. sonnig</span></button>
   <time>14:00<br>16.06.2025</time>`);
</script>
</body>
</html>
